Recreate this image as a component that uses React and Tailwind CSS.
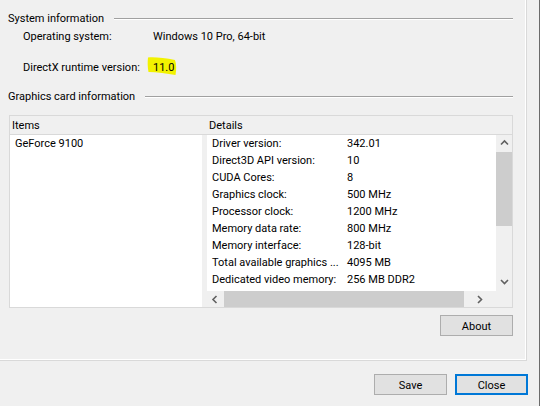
import React from "react";

const Chev = ({ dir }) => {
  const d = {
    up: "M1 5.5 L4.5 2 L8 5.5",
    down: "M1 2 L4.5 5.5 L8 2",
    left: "M5.5 1 L2 4.5 L5.5 8",
    right: "M2 1 L5.5 4.5 L2 8",
  }[dir];
  return (
    <svg width="9" height="9" viewBox="0 0 9 9" className="block">
      <path d={d} fill="none" stroke="#606060" strokeWidth="1.6" />
    </svg>
  );
};

const details = [
  ["Driver version:", "342.01"],
  ["Direct3D API version:", "10"],
  ["CUDA Cores:", "8"],
  ["Graphics clock:", "500 MHz"],
  ["Processor clock:", "1200 MHz"],
  ["Memory data rate:", "800 MHz"],
  ["Memory interface:", "128-bit"],
  ["Total available graphics ...", "4095 MB"],
  ["Dedicated video memory:", "256 MB DDR2"],
];

const SectionHeader = ({ title }) => (
  <div className="flex items-center h-[16px] gap-[10px]">
    <span className="leading-[16px] translate-y-px">{title}</span>
    <div className="flex-1 border-t border-t-[#a0a0a0] border-b border-b-white mt-[2px]" />
  </div>
);

const Btn = ({ children, primary }) => (
  <div
    className={
      "w-[73px] h-[21px] bg-[#e1e1e1] flex items-center justify-center leading-none " +
      (primary ? "border-2 border-[#0078d7]" : "border border-[#adadad]")
    }
  >
    <span className="translate-y-px">{children}</span>
  </div>
);

export default function App() {
  return (
    <div className="w-[540px] h-[406px] bg-[#f0f0f0] border-r border-r-[#6b6b6b] flex flex-col text-[11px] text-black font-['Roboto',sans-serif] overflow-hidden">
      <div className="w-[527px] h-[361px] border-r border-b border-[#d9d9d9] shrink-0">
        <div className="h-full border-r border-b border-white flex flex-col pl-[8px] pr-[12px]">
          <div className="mt-[10px]">
            <SectionHeader title="System information" />
          </div>
          <div className="flex h-[16px] items-center mt-[2px] pl-[15px] whitespace-nowrap">
            <span className="w-[130px] translate-y-px">Operating system:</span>
            <span className="translate-y-px">Windows 10 Pro, 64-bit</span>
          </div>
          <div className="flex h-[16px] items-center mt-[15px] pl-[15px] whitespace-nowrap">
            <span className="w-[130px] translate-y-px">DirectX runtime version:</span>
            <span className="relative translate-y-px">
              <svg
                className="absolute left-[-6px] top-[-4px]"
                width="30"
                height="20"
                viewBox="0 0 30 20"
              >
                <path
                  d="M1 1.5 C8 1 18 2 28 4 C29.5 8 29.5 14 28.5 19 C20 17.5 10 16 1.5 16 C0.5 11 0.5 6 1 1.5 Z"
                  fill="#f2f200"
                />
              </svg>
              <span className="relative">11.0</span>
            </span>
          </div>
          <div className="mt-[13px]">
            <SectionHeader title="Graphics card information" />
          </div>
          <div className="ml-[1px] mt-[11px] w-[504px] h-[193px] border border-[#d9d9d9] flex flex-col shrink-0">
            <div className="h-[19px] border-b border-[#d9d9d9] flex items-center">
              <div className="w-[197px] pl-[2px] translate-y-px">Items</div>
              <div className="pl-[2px] translate-y-px">Details</div>
            </div>
            <div className="flex h-[172px]">
              <div className="w-[192px] bg-white">
                <div className="h-[17px] flex items-center pl-[5px]">
                  <span className="translate-y-px">GeForce 9100</span>
                </div>
              </div>
              <div className="w-[5px]" />
              <div className="w-[305px] flex flex-col">
                <div className="flex h-[156px]">
                  <div className="w-[289px] bg-white flex flex-col">
                    {details.map(([k, v]) => (
                      <div key={k} className="h-[17px] flex items-center pl-[5px] whitespace-nowrap">
                        <span className="w-[135px] shrink-0 translate-y-px">{k}</span>
                        <span className="translate-y-px">{v}</span>
                      </div>
                    ))}
                  </div>
                  <div className="w-[16px] flex flex-col">
                    <div className="h-[17px] flex items-center justify-center">
                      <Chev dir="up" />
                    </div>
                    <div className="h-[74px] bg-[#cdcdcd]" />
                    <div className="flex-1" />
                    <div className="h-[17px] flex items-center justify-center">
                      <Chev dir="down" />
                    </div>
                  </div>
                </div>
                <div className="flex h-[16px]">
                  <div className="w-[289px] flex">
                    <div className="w-[17px] flex items-center justify-center">
                      <Chev dir="left" />
                    </div>
                    <div className="w-[240px] bg-[#cdcdcd]" />
                    <div className="flex-1 flex items-center justify-center">
                      <Chev dir="right" />
                    </div>
                  </div>
                  <div className="w-[16px]" />
                </div>
              </div>
            </div>
          </div>
          <div className="flex justify-end mt-[7px]">
            <Btn>About</Btn>
          </div>
        </div>
      </div>
      <div className="flex justify-end gap-[8px] mt-[13px] pr-[11px]">
        <Btn>Save</Btn>
        <Btn primary>Close</Btn>
      </div>
    </div>
  );
}
